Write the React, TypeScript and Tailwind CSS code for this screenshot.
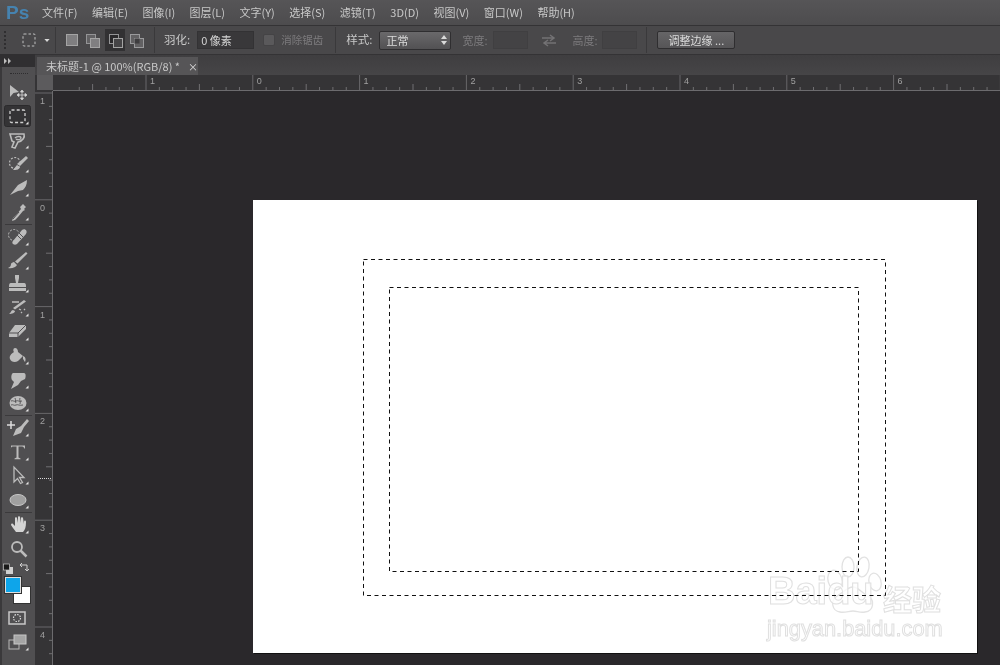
import React from "react";

const font = { fontFamily: '"Noto Sans CJK SC","Liberation Sans",sans-serif' };
const G = "#bcbcbc";

function Tool({ children, corner = true, active = false, h = "h-6" }: { children?: React.ReactNode; corner?: boolean; active?: boolean; h?: string }) {
  return (
    <div className={`${h} flex items-center shrink-0 pl-px`}>
      <svg width="30" height="22" viewBox="0 0 30 22" className="block">
        {active && <rect x="1.500" y="0.500" width="26" height="21" rx="2" fill="#343335" stroke="#2b2a2c" />}
        <g transform="translate(-3 0)">{children}</g>
        {corner && <path d="M25.500 16.500v3h-3z" fill="#e4e4e4" />}
      </svg>
    </div>
  );
}

const Sep = () => <div className="h-px mx-[3px] bg-[#3b3a3c] shrink-0" />;

function HRuler() {
  const els: React.ReactNode[] = [];
  const base = 146 - 53;
  const unit = 106.8;
  for (let i = -5; i < 72; i++) {
    const x = base + (i * unit) / 8;
    if (x < 0) continue;
    const m = ((i % 8) + 8) % 8;
    const len = m === 0 ? 16 : m === 4 ? 6 : 3;
    els.push(<line key={i} x1={x} x2={x} y1={15 - len} y2={15} stroke={m === 0 ? "#68676a" : "#706f72"} />);
  }
  const labels = ["1", "0", "1", "2", "3", "4", "5", "6"];
  return (
    <svg width="947" height="16" viewBox="0 0 947 16" className="block">
      <line x1="0" x2="947" y1="15.500" y2="15.500" stroke="#6c6b6e" />
      {els}
      {labels.map((l, i) => (
        <text key={i} x={base + i * unit + 4} y="9" fontSize="9" fill="#a0a0a0" fontFamily="Liberation Sans">{l}</text>
      ))}
    </svg>
  );
}

function VRuler() {
  const els: React.ReactNode[] = [];
  const base = 93 - 91;
  const unit = 106.8;
  for (let i = 0; i < 48; i++) {
    const y = base + (i * unit) / 8;
    const m = i % 8;
    const len = m === 0 ? 18 : m === 4 ? 6 : 3;
    els.push(<line key={i} x1={17 - len} x2={17} y1={y} y2={y} stroke={m === 0 ? "#68676a" : "#706f72"} />);
  }
  const labels = ["1", "0", "1", "2", "3", "4"];
  return (
    <svg width="18" height="574" viewBox="0 0 18 574" className="block">
      <line x1="17.500" x2="17.500" y1="0" y2="574" stroke="#6c6b6e" />
      {els}
      {labels.map((l, i) => (
        <text key={i} x="5" y={base + i * unit + 11} fontSize="9" fill="#a0a0a0" fontFamily="Liberation Sans">{l}</text>
      ))}
      <line x1="3" x2="17" y1="387.500" y2="387.500" stroke="#d8d8d8" strokeDasharray="1 1" />
    </svg>
  );
}

function Toolbar() {
  return (
    <div className="w-[35px] shrink-0 bg-[#504f51] border-l-2 border-[#3a393b] flex flex-col -mt-px">
      <div className="h-[13px] bg-[#302f31] -ml-0.5 flex items-center pl-[4px] shrink-0">
        <svg width="8" height="6" viewBox="0 0 8 6"><path d="M0 0l3 3-3 3zM4 0l3 3-3 3z" fill="#bdbdbd" /></svg>
      </div>
      <div className="h-[13px] flex items-center justify-center shrink-0">
        <div className="w-[18px] h-px border-t border-dotted border-[#2e2d2f]" />
      </div>
      <Tool corner={false}>
        <path d="M10 4v12l3.500-4L19 11z" fill={G} />
        <path d="M22 10v8M18 14h8M22 9l-1.500 2h3zM22 19l-1.500-2h3zM17 14l2-1.500v3zM27 14l-2-1.500v3z" stroke="#d4d4d4" strokeWidth="0.800" fill="#d4d4d4" />
      </Tool>
      <Tool active>
        <rect x="10" y="5" width="15" height="12.500" rx="1.500" fill="none" stroke="#cfcfcf" strokeWidth="1.300" strokeDasharray="3 2.200" />
      </Tool>
      <Tool>
        <path d="M10 5h14c1 3-1 7-6 8l-3 6-3-1 2-5-2-1z" fill="none" stroke={G} strokeWidth="1.600" />
        <path d="M15 9c2-2 6-2 6 0s-4 2-5 1" fill="none" stroke={G} strokeWidth="1.300" />
      </Tool>
      <Tool>
        <circle cx="15" cy="10" r="5.500" fill="none" stroke={G} strokeWidth="1.200" strokeDasharray="2 1.500" />
        <path d="M26 3l2 2-8 8-3-2z" fill={G} />
        <path d="M17 12l3 2c-1 3-4 3-7 3z" fill={G} />
      </Tool>
      <Tool>
        <path d="M10 18l8-10 9-5c0 5-2 8-4 10l-5 1z" fill={G} />
      </Tool>
      <Tool>
        <path d="M23 3l3 3-2 2 1 1-2 1-5 6-3 3-3 1 1-3 3-3 5-6-1-2z" fill={G} />
        <path d="M13 18l6-7" stroke="#504f51" />
      </Tool>
      <Sep />
      <div className="flex flex-col shrink-0">
        <Tool h="h-[23.800px]">
          <circle cx="14" cy="9" r="5.500" fill="none" stroke={G} strokeWidth="1" strokeDasharray="2 1.500" />
          <path d="M13 15l9-11c3-2 6 1 4 4l-9 10c-3 2-6-1-4-3z" fill={G} />
          <path d="M17 9l4 4M19 7l4 4" stroke="#504f51" />
        </Tool>
        <Tool h="h-[23.800px]">
          <path d="M26 2l1.500 1.500-10 10-2.500-2z" fill={G} />
          <path d="M14 12l3 3c-1 2-5 4-9 3 2-1 3-2 3-4 0-1 2-2 3-2z" fill={G} />
        </Tool>
        <Tool h="h-[23.800px]">
          <path d="M15 2h4v3l-1 5h6c2 0 2 2 2 4H9c0-2 0-4 2-4h5l-1-5z" fill={G} />
          <rect x="9" y="15" width="17" height="3" fill={G} />
        </Tool>
        <Tool h="h-[23.800px]">
          <path d="M24 3l2 1.500-11 8-2-1.500z" fill={G} />
          <path d="M9 17c2-1 2-4 4-4l2 1c0 2-3 3-6 3z" fill={G} />
          <path d="M12 5h7M19 12l2 1M21 15l1 1M24 12l1 1" stroke={G} strokeWidth="1.300" />
        </Tool>
        <Tool h="h-[23.800px]">
          <path d="M15 4h11v4l-8 8H9v-4z" fill={G} />
          <path d="M9 12h9v4M18 12l8-8" stroke="#504f51" fill="none" />
        </Tool>
        <Tool h="h-[23.800px]">
          <path d="M15 3c-2 0-2 3-1 4-3 2-5 4-4 7 1 3 5 4 8 2l5-5-5-4c0-2-1-4-3-4z" fill={G} />
          <path d="M23 11c3 1 3 4 2 6-1-1-1-2-2-3z" fill={G} />
        </Tool>
        <Tool h="h-[23.800px]">
          <path d="M13 4h11c2 0 2 4 1 6l-4 2-3 4-7 4 3-7-2-2c-1-2-1-6 1-7z" fill={G} />
        </Tool>
        <Tool h="h-[23.800px]">
          <ellipse cx="18" cy="11" rx="8.500" ry="7" fill={G} />
          <path d="M11 9c2-1 3 1 5 0s3 1 6 0M11 13c2-1 3 1 5 0s3 1 7 0M15 6c1 2 0 4 1 5M20 6c-1 2 1 3 0 6" stroke="#504f51" strokeWidth="0.900" fill="none" />
        </Tool>
      </div>
      <Sep />
      <Tool>
        <path d="M7 8h8M11 4v8" stroke="#dcdcdc" strokeWidth="1.500" />
        <path d="M27 2l2 2-5 6-3 6-8 3 3-7 5-3z" fill={G} />
      </Tool>
      <Tool>
        <path d="M11 4.500h14v3h-.800c0-1-1-2-2-2h-3.700v11l2 1v.700h-6v-.700l2-1v-11h-3.700c-1 0-2 1-2 2H11z" fill={G} />
      </Tool>
      <Tool>
        <path d="M14 2v15l3.500-3.500 3 5 2-1-3-5H24z" fill="#504f51" stroke={G} strokeWidth="1.300" />
      </Tool>
      <Tool>
        <ellipse cx="18" cy="11" rx="8" ry="5.500" fill="#a0a0a0" stroke="#c8c8c8" />
      </Tool>
      <Sep />
      <Tool>
        <path d="M11 11l2 3 3 4h7c2-2 3-5 3-10 0-2-2-2-2 0v2l-1-6c0-1-2-1-2 0v5l-1-6c0-1-2-1-2 0v6l-1-5c0-1-2-1-2 0v8l-2-2c-1-1-2 0-2 1z" fill="#d4d4d4" />
      </Tool>
      <Tool corner={false}>
        <circle cx="17" cy="9" r="5" fill="none" stroke={G} strokeWidth="1.800" />
        <path d="M20.500 12.500l6 6" stroke={G} strokeWidth="2.500" />
      </Tool>
      <div className="relative h-[45px] shrink-0">
        <svg width="30" height="14" viewBox="0 0 30 14" className="block">
          <rect x="4" y="6" width="7" height="7" fill="#d0d0d0" />
          <rect x="1.500" y="3" width="6" height="6" fill="#1a1a1a" stroke="#c8c8c8" strokeWidth="0.700" />
          <path d="M20 2l-2 2 2 2M18 4h7v5M27 8l-2 2-2-2" stroke="#d0d0d0" fill="none" />
        </svg>
        <div className="absolute left-[11px] top-[25px] w-[18px] h-[18px] bg-white border border-[#333]" />
        <div className="absolute left-[2px] top-[15px] w-[18px] h-[18px] bg-[#0ea5ea] border border-[#333] outline outline-1 outline-[#ddd] -outline-offset-2" />
      </div>
      <Tool corner={false}>
        <rect x="9" y="5" width="16" height="12" fill="none" stroke="#c8c8c8" strokeWidth="1.500" />
        <circle cx="17" cy="11" r="3.500" fill="none" stroke="#d8d8d8" strokeWidth="1.200" strokeDasharray="1.500 1.200" />
      </Tool>
      <Tool>
        <rect x="9" y="9" width="10" height="9" fill="#504f51" stroke="#b8b8b8" />
        <rect x="14" y="4" width="12" height="9" fill="#a5a5a5" stroke="#c8c8c8" />
      </Tool>
    </div>
  );
}

function Options() {
  const Div = ({ ml }: { ml: string }) => <div className={`w-px h-[26px] bg-[#3a393b] ${ml}`} />;
  return (
    <div className="h-[30px] shrink-0 bg-[#49484a] border-y border-[#343335] flex items-center text-[11px] text-[#c8c8c8]">
      <div className="ml-[4px] w-[4px] h-[18px] border-l-2 border-dotted border-[#2f2e30]" />
      <svg width="14" height="14" viewBox="0 0 14 14" className="ml-[14px]">
        <rect x="1" y="1" width="12" height="12" rx="1" fill="none" stroke="#c0c0c0" strokeWidth="1" strokeDasharray="2.500 2" />
      </svg>
      <svg width="6" height="3" viewBox="0 0 7 4" className="ml-[8px]"><path d="M0 0h7L3.500 4z" fill="#dadada" /></svg>
      <Div ml="ml-[5px]" />
      <svg width="88" height="22" viewBox="0 0 88 22" className="ml-[3px]">
        <rect x="7.500" y="5.500" width="11" height="11" fill="#7f7e80" stroke="#a4a4a4" />
        <rect x="27.500" y="5.500" width="9" height="9" fill="#626163" stroke="#949496" />
        <rect x="31.500" y="9.500" width="9" height="9" fill="#807f81" stroke="#a4a4a4" />
        <rect x="46" y="0" width="20" height="22" fill="#323133" />
        <rect x="50.500" y="5.500" width="9" height="9" fill="#2a292b" stroke="#949496" />
        <rect x="54.500" y="9.500" width="9" height="9" fill="#454446" stroke="#a4a4a4" />
        <rect x="71.500" y="5.500" width="9" height="9" fill="#626163" stroke="#9a9a9c" />
        <rect x="75.500" y="9.500" width="9" height="9" fill="#626163" stroke="#9a9a9c" />
        <rect x="75.500" y="9.500" width="5" height="5" fill="#3e3d3f" />
      </svg>
      <Div ml="ml-[7px]" />
      <span className="ml-[9px] text-[11.500px]">羽化:</span>
      <div className="ml-[7px] w-[57px] h-[18px] bg-[#39383a] border border-[#333234] flex items-center pl-[3px] text-[#d4d4d4]">0 像素</div>
      <div className="ml-[9px] w-[12px] h-[12px] bg-[#5a595b] border border-[#444345] rounded-[2px]" />
      <span className="ml-[6px] text-[#7c7b7d] text-[10.500px]">消除锯齿</span>
      <Div ml="ml-[12px]" />
      <span className="ml-[10px] text-[11.500px]">样式:</span>
      <div className="ml-[7px] w-[72px] h-[19px] bg-gradient-to-b from-[#6a696b] to-[#525153] border border-[#2f2e30] rounded-[2px] flex items-center pl-[6px] pr-[3px] justify-between text-[#dcdcdc]">
        <span>正常</span>
        <svg width="6" height="10" viewBox="0 0 6 10"><path d="M0 4l3-4 3 4zM0 6h6l-3 4z" fill="#dadada" /></svg>
      </div>
      <span className="ml-[11px] text-[#7c7b7d] w-[26px] whitespace-nowrap">宽度:</span>
      <div className="ml-[5px] w-[35px] h-[18px] bg-[#444345] border border-[#403f41]" />
      <svg width="16" height="13" viewBox="0 0 16 13" className="ml-[13px]">
        <path d="M1 4h11M9 1l4 3-4 3M15 9H4M7 6L3 9l4 3" fill="none" stroke="#737274" strokeWidth="1.500" />
      </svg>
      <span className="ml-[15px] text-[#7c7b7d] w-[26px] whitespace-nowrap">高度:</span>
      <div className="ml-[4px] w-[35px] h-[18px] bg-[#444345] border border-[#403f41]" />
      <Div ml="ml-[9px]" />
      <div className="ml-[10px] w-[78px] h-[18px] bg-gradient-to-b from-[#666567] to-[#565557] border border-[#2f2e30] rounded-[2px] flex items-center justify-center text-[#dcdcdc]">调整边缘 ...</div>
    </div>
  );
}

function Watermark() {
  return (
    <div className="absolute left-[512px] top-[355px] w-[190px] h-[90px]" style={font}>
      <svg width="80" height="62" viewBox="0 0 80 62" className="absolute left-[50px] top-0">
        <g fill="#ffffff" stroke="#e2e2e2" strokeWidth="1.300">
          <ellipse cx="20" cy="25" rx="7" ry="10" transform="rotate(-15 20 25)" />
          <ellipse cx="33" cy="12" rx="6" ry="10" />
          <ellipse cx="48" cy="12" rx="6" ry="10" transform="rotate(10 48 12)" />
          <ellipse cx="60" cy="27" rx="6" ry="9" transform="rotate(-15 60 27)" />
          <path d="M38 32c5 0 9 6 15 9 7 4 6 15-3 16-5 1-8-1-12-1s-8 2-13 1c-8-1-10-11-3-16 6-3 10-9 16-9z" />
        </g>
      </svg>
      <span className="absolute left-[3px] top-[17px] leading-none text-[38px] font-bold text-white/80 [-webkit-text-stroke:1px_#e0e0e0] [font-family:'Liberation_Sans']">Baidu</span>
      <span className="absolute left-[118px] top-[29px] leading-none text-[29px] font-bold text-white/80 [-webkit-text-stroke:1px_#e0e0e0] whitespace-nowrap">经验</span>
      <span className="absolute left-[2px] top-[63px] leading-none text-[21.800px] text-white [-webkit-text-stroke:1px_#e0e0e0] whitespace-nowrap [font-family:'Liberation_Sans']">jingyan.baidu.com</span>
    </div>
  );
}

export default function App() {
  const menu = ["文件(F)", "编辑(E)", "图像(I)", "图层(L)", "文字(Y)", "选择(S)", "滤镜(T)", "3D(D)", "视图(V)", "窗口(W)", "帮助(H)"];
  return (
    <div className="w-[1000px] h-[665px] overflow-hidden flex flex-col bg-[#2a282b] [filter:blur(0.35px)]" style={font}>
      <div className="h-[25px] shrink-0 bg-gradient-to-b from-[#565557] to-[#4d4c4e] flex items-center text-[11px] text-[#c8c8c8]">
        <span className="ml-[6px] w-[36px] text-[19px] font-bold text-[#4683b0] leading-none [font-family:'Liberation_Sans']">Ps</span>
        <div className="flex gap-[14.500px]">
          {menu.map((m) => <span key={m} className="whitespace-nowrap">{m}</span>)}
        </div>
      </div>
      <Options />
      <div className="flex-1 flex min-h-0">
        <Toolbar />
        <div className="flex-1 flex flex-col min-w-0">
          <div className="h-5 shrink-0 bg-gradient-to-b from-[#3f3e40] to-[#464547] flex items-end pl-[2px]">
            <div className="w-[161px] h-[18px] bg-[#565557] flex items-center pl-[9px] text-[11px] text-[#c8c8c8] whitespace-nowrap">
              <span>未标题-1 @ 100%(RGB/8) *</span>
              <span className="ml-[8px] text-[#dcdcdc] text-[10px]">×</span>
            </div>
          </div>
          <div className="h-4 shrink-0 flex bg-[#353436]">
            <div className="w-[18px] shrink-0 pl-[2px]"><div className="h-[15px] bg-[#5c5b5d]" /></div>
            <HRuler />
          </div>
          <div className="flex-1 flex min-h-0">
            <div className="w-[18px] shrink-0 bg-[#353436]"><VRuler /></div>
            <div className="flex-1 pl-[200px] pt-[109px] bg-[#2a282b]">
              <div className="relative w-[724px] h-[453px] bg-white shadow-[1px_1px_0_#111]">
                <Watermark />
                <svg width="724" height="453" viewBox="0 0 724 453" className="absolute inset-0">
                  <rect x="110.500" y="59.500" width="522" height="336" fill="none" stroke="#111" strokeWidth="1" strokeDasharray="4 3.500" />
                  <rect x="136.500" y="87.500" width="469" height="284" fill="none" stroke="#111" strokeWidth="1" strokeDasharray="4 3.500" />
                </svg>
              </div>
            </div>
          </div>
        </div>
      </div>
    </div>
  );
}
